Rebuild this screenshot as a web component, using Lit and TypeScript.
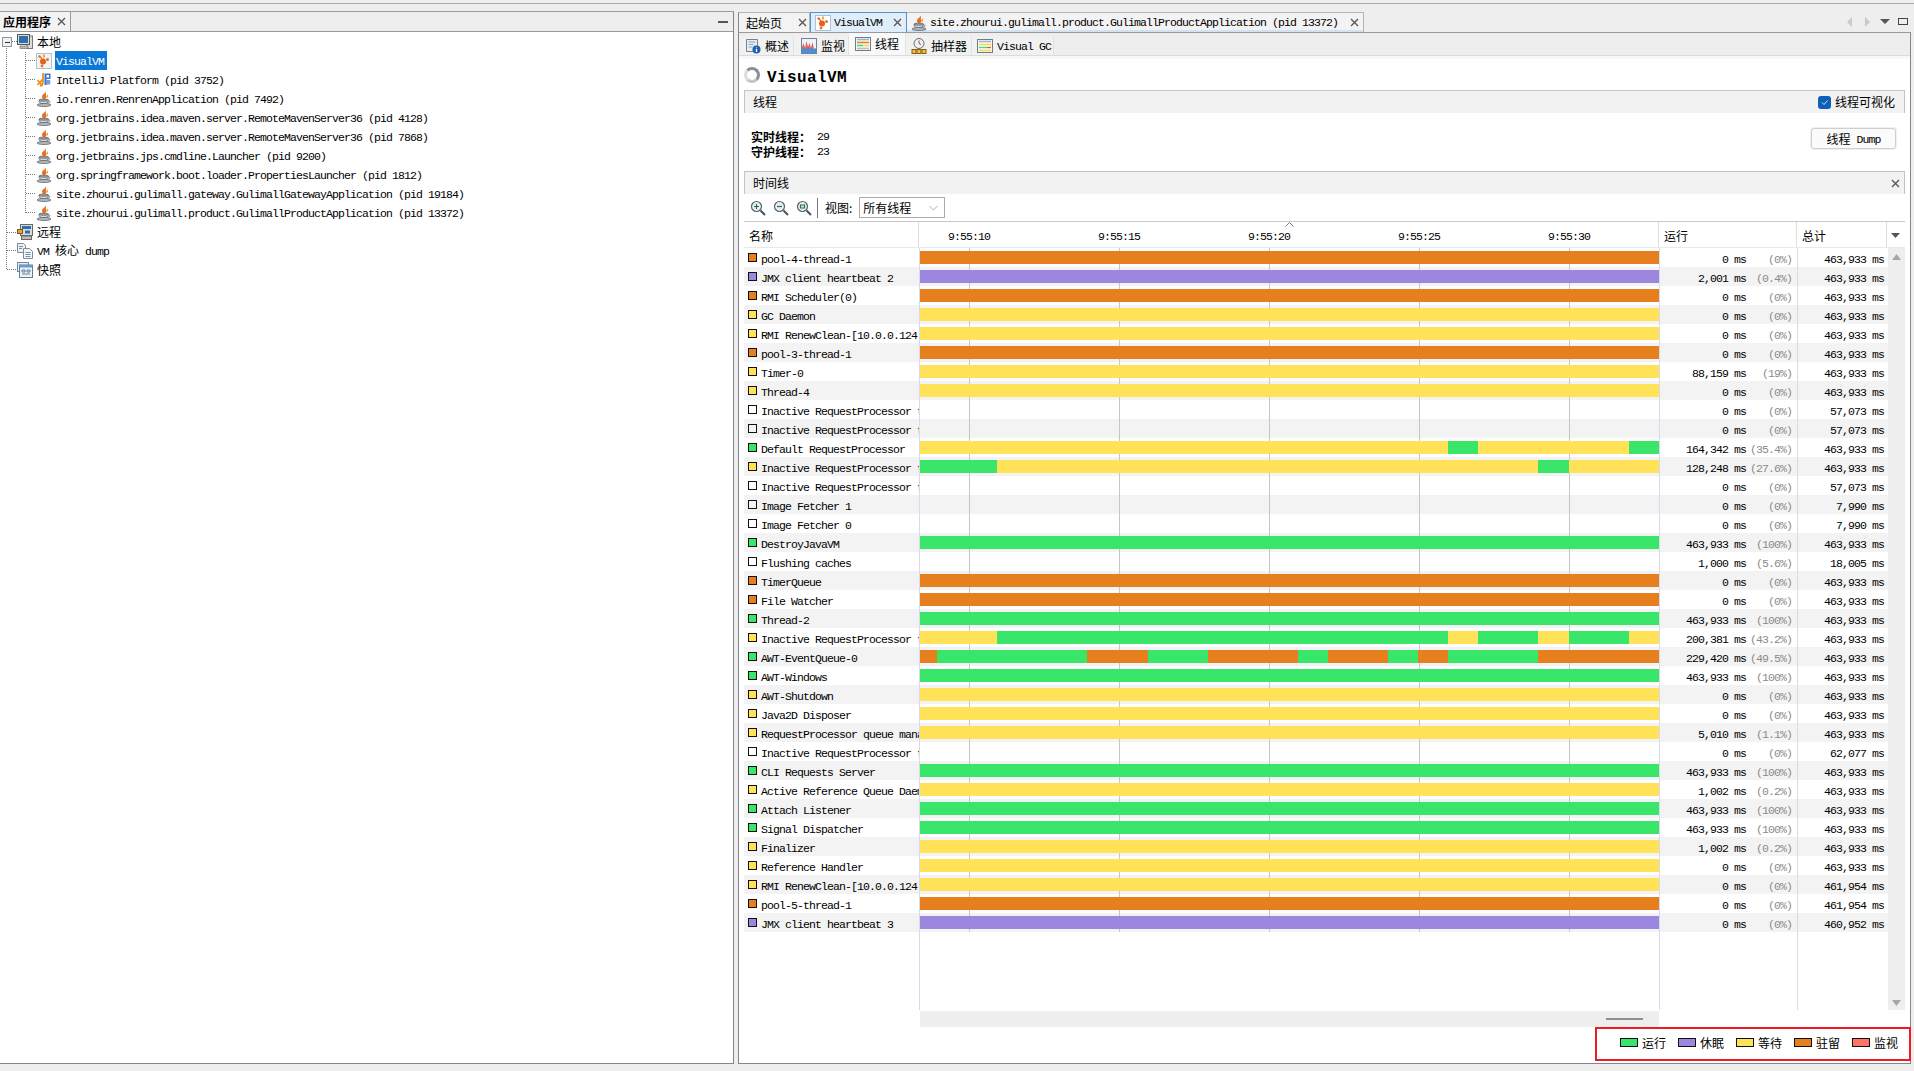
import { LitElement, html, css, svg } from "lit";
import { customElement } from "lit/decorators.js";

const C: Record<string, string> = { g: "#3ae66a", p: "#9b87dd", y: "#ffe257", o: "#e6801e", r: "#ff7369", n: "transparent" };
const INA = "Inactive RequestProcessor thread [Was:Default]";
const RMI = "RMI RenewClean-[10.0.0.124:52301]";
const T = "463,933";
type Seg = [string, number];
type Row = [string, string, string, string, string, Seg[]?];
const rows: Row[] = [
  ["pool-4-thread-1", "o", "0", "0%", T],
  ["JMX client heartbeat 2", "p", "2,001", "0.4%", T],
  ["RMI Scheduler(0)", "o", "0", "0%", T],
  ["GC Daemon", "y", "0", "0%", T],
  [RMI, "y", "0", "0%", T],
  ["pool-3-thread-1", "o", "0", "0%", T],
  ["Timer-0", "y", "88,159", "19%", T],
  ["Thread-4", "y", "0", "0%", T],
  [INA, "n", "0", "0%", "57,073"],
  [INA, "n", "0", "0%", "57,073"],
  ["Default RequestProcessor", "g", "164,342", "35.4%", T, [["y", 1448], ["g", 1478], ["y", 1629], ["g", 1659]]],
  [INA, "y", "128,248", "27.6%", T, [["g", 997], ["y", 1538], ["g", 1569], ["y", 1659]]],
  [INA, "n", "0", "0%", "57,073"],
  ["Image Fetcher 1", "n", "0", "0%", "7,990"],
  ["Image Fetcher 0", "n", "0", "0%", "7,990"],
  ["DestroyJavaVM", "g", T, "100%", T],
  ["Flushing caches", "n", "1,000", "5.6%", "18,005"],
  ["TimerQueue", "o", "0", "0%", T],
  ["File Watcher", "o", "0", "0%", T],
  ["Thread-2", "g", T, "100%", T],
  [INA, "y", "200,381", "43.2%", T, [["y", 997], ["g", 1448], ["y", 1478], ["g", 1538], ["y", 1569], ["g", 1629], ["y", 1659]]],
  ["AWT-EventQueue-0", "g", "229,420", "49.5%", T, [["o", 937], ["g", 1087], ["o", 1148], ["g", 1208], ["o", 1298], ["g", 1328], ["o", 1388], ["g", 1418], ["o", 1448], ["g", 1538], ["o", 1659]]],
  ["AWT-Windows", "g", T, "100%", T],
  ["AWT-Shutdown", "y", "0", "0%", T],
  ["Java2D Disposer", "y", "0", "0%", T],
  ["RequestProcessor queue manager", "y", "5,010", "1.1%", T],
  [INA, "n", "0", "0%", "62,077"],
  ["CLI Requests Server", "g", T, "100%", T],
  ["Active Reference Queue Daemon", "y", "1,002", "0.2%", T],
  ["Attach Listener", "g", T, "100%", T],
  ["Signal Dispatcher", "g", T, "100%", T],
  ["Finalizer", "y", "1,002", "0.2%", T],
  ["Reference Handler", "y", "0", "0%", T],
  [RMI, "y", "0", "0%", "461,954"],
  ["pool-5-thread-1", "o", "0", "0%", "461,954"],
  ["JMX client heartbeat 3", "p", "0", "0%", "460,952"],
];

const java = html`<svg class="ic" viewBox="0 0 16 16" width="16" height="16">
  <path d="M9.200 0c1.400 2.200-3.700 3.400-3.200 6 .2 1 .9 1.500 1 2.300h1.800c1.900-1.200 2.100-2.900 1.300-4.100C9.300 3.200 10.800 1.700 9.200 0z" fill="#e8701a"/>
  <path d="M11.400 3c.8 1.400-1.200 2.200-.6 4 1-.8 2.200-2.400.6-4z" fill="#ee8a30"/>
  <path d="M3 9.200h9.400c.1 2.600-1.700 3.700-4.700 3.700S2.900 11.800 3 9.200z" fill="#d6dadf" stroke="#5f656b" stroke-width=".8"/>
  <ellipse cx="7.700" cy="9.200" rx="4.700" ry="1.100" fill="#9aa0a6" stroke="#5e646a" stroke-width=".7"/>
  <path d="M12.300 9.800c2.200-.4 2.200 2.200-.6 2.400" stroke="#5f656b" stroke-width=".8" fill="none"/>
  <ellipse cx="8" cy="14" rx="7" ry="1.500" fill="#b4b9be" stroke="#5e646a" stroke-width=".8"/>
</svg>`;
const vvmInner = svg`<path d="M8 1.500v3M6 6l-2-2.500" stroke="#e8761a" stroke-width="1.300" fill="none"/>
  <circle cx="7" cy="8.500" r="3" fill="#e8601a"/><circle cx="11.500" cy="6.500" r="1.500" fill="#e8761a"/>
  <circle cx="3.500" cy="3.500" r="1.200" fill="#e8761a"/><circle cx="6" cy="13" r="1.400" fill="#e8761a"/>`;
const vvmIc = html`<svg class="ic" viewBox="0 0 16 16" width="16" height="16"><rect x=".5" y=".5" width="15" height="15" fill="#f4f4f4" stroke="#a9c4dc"/>${vvmInner}</svg>`;
const vvmIcWhite = html`<svg class="ic" viewBox="0 0 16 16" width="16" height="16"><rect x=".5" y=".5" width="15" height="15" fill="#fff" stroke="#a9c4dc"/>${vvmInner}</svg>`;
const ijIc = html`<svg class="ic" viewBox="0 0 16 16" width="16" height="16">
  <path d="M9 1.500h5.500v5.500H10.500v6H8.500V1.500z M10.500 3v2.500h2.500V3z" fill="#3b78c8" fill-rule="evenodd"/>
  <path d="M7 1v8.500c0 2.500-1 4-3 4.500M1.500 13l5.500-6M1.500 8l5 6" stroke="#f08a1a" stroke-width="1.700" fill="none"/>
  <path d="M10 8h3.500c1.200 0 1.200 4.500 0 4.500H10z" fill="#6d9fe0"/>
</svg>`;
const compIc = html`<svg class="ic" viewBox="0 0 16 16" width="16" height="16">
  <rect x="10" y="2" width="5.500" height="12.500" fill="#dcdcdc" stroke="#777"/>
  <rect x=".5" y=".5" width="12" height="10" fill="#d8dde2" stroke="#555"/>
  <rect x="2" y="2" width="9" height="7" fill="#2f6fa8"/>
  <path d="M3 12h8v2.500H3z" fill="#bbb" stroke="#666" stroke-width=".6"/>
</svg>`;
const remoteIc = html`<svg class="ic" viewBox="0 0 16 16" width="16" height="16">
  <rect x="3.500" y=".5" width="12" height="11" fill="#d8dde2" stroke="#666"/>
  <rect x="5" y="2" width="9" height="3" fill="#2f6fa8"/><rect x="8" y="6.500" width="5" height="3" fill="#2f6fa8"/>
  <rect x=".5" y="5.500" width="5" height="4" fill="#e8a13a" stroke="#7a5a20"/>
  <rect x="4.500" y="12" width="10" height="3.500" fill="#bbb" stroke="#666"/>
</svg>`;
const dumpIc = html`<svg class="ic" viewBox="0 0 16 16" width="16" height="16">
  <path d="M.5.500h6l2 2v7h-8z" fill="#eef1f4" stroke="#7f8a94"/>
  <path d="M6.500 5.500h6l3 3v7h-9z" fill="#f4f6f8" stroke="#7f8a94"/>
  <path d="M2 3.500h4M2 5.500h3M8.500 9.500h5M8.500 11.500h5M8.500 13.500h5" stroke="#6f93b5"/>
</svg>`;
const snapIc = html`<svg class="ic" viewBox="0 0 16 16" width="16" height="16">
  <rect x=".5" y=".5" width="11" height="9" fill="#e8edf2" stroke="#6d8aa5"/>
  <rect x="2.500" y="3" width="13" height="12.500" fill="#eef2f6" stroke="#5e7f9e"/>
  <rect x="2.500" y="3" width="13" height="2.500" fill="#6d9bc5"/>
  <path d="M5 8h3v2H5zM10 8h3v2h-3zM5 12h8" stroke="#5e7f9e" fill="none"/>
</svg>`;
const infoIc = html`<svg class="ic" viewBox="0 0 16 16" width="16" height="16">
  <path d="M1.500 1.500h11v12h-11z" fill="#e9edf1" stroke="#77838f"/>
  <path d="M3.500 4h7M3.500 6.500h5M3.500 9h4" stroke="#8ea3b6"/>
  <circle cx="11.500" cy="11.500" r="4" fill="#1f5fb0"/><path d="M11.500 9.500v.8M11.500 11v3" stroke="#fff" stroke-width="1.300"/>
</svg>`;
const monIc = html`<svg class="ic" viewBox="0 0 16 16" width="16" height="16">
  <rect x=".5" y=".5" width="15" height="15" fill="#eef3f8" stroke="#6f8296"/>
  <path d="M1 12V9l1.500-4 1.500 5 1.500-7 1.500 6 1.500-4 1.500 5 1.500-6 1.500 7 1.500 1v3z" fill="#e4605a"/>
  <path d="M1 15v-4l2-2 2 3 2-3 2 3 2-3 2 2 2-1v5z" fill="#4a8fd8"/>
</svg>`;
const bars = html`<svg class="ic" viewBox="0 0 16 16" width="16" height="16">
  <rect x=".5" y="1.500" width="15" height="13" fill="#f2f4f6" stroke="#6f7c88"/>
  <path d="M2 3.500h12" stroke="#9fb3c6" stroke-width="1.500"/>
  <path d="M2 6.500h12" stroke="#e6801e" stroke-width="1.500"/><path d="M2 9.500h6" stroke="#3ae66a" stroke-width="1.500"/><path d="M8 9.500h6" stroke="#ffd84a" stroke-width="1.500"/><path d="M2 12.500h12" stroke="#b9c0c7" stroke-width="1.500"/>
</svg>`;
const gcIc = html`<svg class="ic" viewBox="0 0 16 16" width="16" height="16">
  <rect x=".5" y="1.500" width="15" height="13" fill="#f6f7f8" stroke="#6f7c88"/>
  <path d="M2 3.500h12" stroke="#9fb3c6" stroke-width="1.500"/>
  <path d="M2 6.500h12M2 12.500h12" stroke="#ffd84a" stroke-width="1.300"/><path d="M2 9.500h8" stroke="#3ae66a" stroke-width="1.300"/><path d="M10 9.500h4" stroke="#e6601e" stroke-width="1.300"/>
</svg>`;
const samplerIc = html`<svg class="ic" viewBox="0 0 16 16" width="16" height="16">
  <circle cx="8" cy="5.500" r="5" fill="#eef1f4" stroke="#5f6b76"/>
  <path d="M8 2.500v3l2 1" stroke="#c0392b" fill="none"/>
  <rect x="1" y="11.500" width="4" height="4" fill="#f0c040" stroke="#8a5a10"/><rect x="6" y="11.500" width="4" height="4" fill="#f0c040" stroke="#8a5a10"/><rect x="11" y="11.500" width="4" height="4" fill="#f0c040" stroke="#8a5a10"/>
</svg>`;
const zoomIc = (d: string) => html`<svg class="ic" viewBox="0 0 16 16" width="16" height="16">
  <circle cx="6.500" cy="6.500" r="5" fill="#e6eff5" stroke="#55636e" stroke-width="1.200"/>
  <path d="M10.500 10.500l4.500 4.500" stroke="#47525b" stroke-width="2"/>
  <path d="${d}" stroke="#2c6b3c" stroke-width="1.200" fill="none"/>
</svg>`;
const X = html`<svg class="ic" viewBox="0 0 9 9" width="9" height="9"><path d="M1 1l7 7M8 1l-7 7" stroke="#555" stroke-width="1.300"/></svg>`;

@customElement("app-root")
export class AppRoot extends LitElement {
  static styles = css`
    :host { display: block; width: 1914px; height: 1071px; background: #eeeeee; overflow: hidden; color: #000;
      font: 11.5px/1 "Liberation Mono", "Noto Sans CJK SC", monospace; letter-spacing: -0.9px; }
    * { box-sizing: border-box; }
    .c { font: 12px/1 "Noto Sans CJK SC", sans-serif; letter-spacing: 0; }
    .cb { font: 700 12px/1 "Noto Sans CJK SC", sans-serif; letter-spacing: 0; }
    .ic { display: block; flex: none; }
    .topline { height: 11px; padding-top: 3px; }
    .topline div { height: 1px; background: #ababab; }
    .main { display: flex; height: 1053px; gap: 4px; padding-right: 3px; }
    .left { width: 734px; display: flex; flex-direction: column; background: #fff; border-top: 1px solid #9a9a9a; border-right: 1px solid #85858f; border-bottom: 1px solid #85858f; }
    .lhead { height: 20px; flex: none; display: flex; align-items: center; justify-content: space-between; background: #eeeeee; border-bottom: 1px solid #9a9a9a; padding-right: 5px; }
    .ltab { height: 19px; width: 71px; display: flex; align-items: center; padding-left: 3px; gap: 6px; background: #f3f3f3; border-right: 1px solid #9a9a9a; }
    .minus { width: 10px; height: 2px; background: #555; }
    .tree { position: relative; flex: 1; }
    .guides { position: absolute; left: 0; top: -32px; pointer-events: none; }
    .tr { height: 19px; display: flex; align-items: center; white-space: pre; }
    .tr.root { padding-left: 17px; gap: 4px; }
    .tr.kid { padding-left: 36px; gap: 4px; }
    .tr.kid .mono { padding-top: 3px; }
    .tr.root .mono { padding-top: 1px; }
    .sel { background: #0a78d7; color: #fff; height: 19px; width: 52px; display: flex; align-items: center; padding: 2px 0 0 1px; margin-left: -1px; }

    .right { flex: 1; display: flex; flex-direction: column; min-width: 0; }
    .tabs { height: 21px; flex: none; display: flex; align-items: stretch; padding-top: 1px; }
    .tab { display: flex; align-items: center; background: #f3f3f3; border: 1px solid #b5b5b5; border-width: 1px 1px 0 0; white-space: pre; flex: none; }
    .tab.first { border-left: 1px solid #85858f; }
    .tab.active { background: #dfeefa; border-color: #4f93cf; border-left: 1px solid #4f93cf; }
    .tab.t3 { box-shadow: inset 0 -2px 0 #cfe3f5; }
    .t1 { width: 72px; padding-left: 7px; gap: 16px; }
    .t2 { width: 97px; padding-left: 4px; }
    .t2 .lbl { margin-left: 3px; width: 59px; padding-top: 1px; }
    .t3 { width: 457px; padding-left: 4px; }
    .t3 .lbl { margin-left: 1px; width: 416px; padding-left: 2px; padding-top: 1px; margin-right: 6px; }
    .tnav { margin-left: auto; display: flex; align-items: center; height: 20px; }
    .body { flex: 1; display: flex; flex-direction: column; background: #fff; border: 1px solid #85858f; border-top-color: #9a9a9a; min-height: 0; }
    .subs { height: 23px; flex: none; background: #eeeeee; border-bottom: 1px solid #dcdcdc; display: flex; align-items: flex-end; padding-left: 1px; }
    .sub { height: 19px; display: flex; align-items: center; gap: 4px; padding-left: 5px; background: #f1f1f1; border-right: 1px solid #e2e2e2; white-space: pre; flex: none; }
    .sub.on { height: 22px; background: #f9f9f9; align-items: flex-start; padding-top: 3px; }
    .sub.on .c { margin-top: 2px; }
    .sub .mono { padding-top: 3px; }
    .w54 { width: 54px; } .w55 { width: 55px; padding-left: 7px; } .w57 { width: 57px; padding-left: 6px; } .w66 { width: 66px; } .w82 { width: 82px; }
    .strip { height: 3px; flex: none; background: #f8f8f8; }
    .content { flex: 1; display: flex; flex-direction: column; padding: 0 5px; min-height: 0; }
    .title { height: 20px; margin-top: 8px; flex: none; display: flex; align-items: center; gap: 7px; }
    .title b { font: 700 16px/1 "Liberation Mono", monospace; letter-spacing: 0.4px; margin-top: 2px; }
    .spin { width: 16px; height: 16px; border-radius: 50%; border: 3px solid #8a8f94; border-left-color: #ddd; border-bottom-color: #c3c6c9; margin-top: -4px; }
    .sec { height: 23px; margin-top: 3px; flex: none; display: flex; align-items: center; justify-content: space-between; background: #f2f2f2; border: 1px solid #c4c4c4; border-width: 1px 1px 0 1px; padding: 0 6px 0 8px; }
    .sec.tl { margin-top: 0; padding-right: 4px; }
    .chk { display: flex; align-items: center; gap: 4px; padding-right: 3px; }
    .box { width: 13px; height: 13px; border-radius: 3px; background: #0d5fb8; display: flex; align-items: center; justify-content: center; }
    .info { height: 58px; flex: none; display: flex; justify-content: space-between; padding: 16px 9px 0 7px; }
    .stat { height: 15px; display: flex; align-items: center; white-space: pre; }
    .stat .cb { width: 60px; }
    .stat .num { margin-left: 6px; padding-top: 1px; }
    .btn { width: 85px; height: 21px; margin-top: -1px; border: 1px solid #cfcfcf; border-radius: 3px; background: #fbfbfb; box-shadow: 0 0 0 1px #f0f0f0; display: flex; align-items: center; justify-content: center; gap: 6px; white-space: pre; }
    .btn .mono { padding-top: 2px; }
    .tools { height: 27px; flex: none; display: flex; align-items: center; padding: 0 0 0 6px; gap: 7px; }
    .sep { width: 1px; height: 20px; background: #777; margin-left: -2px; }
    .combo { width: 86px; height: 21px; border: 1px solid #ababab; display: flex; align-items: center; justify-content: space-between; padding: 0 6px 0 3px; }
    .thead { height: 27px; flex: none; display: flex; border-top: 1px solid #c8c8c8; border-bottom: 1px solid #e9e9e9; }
    .th { height: 25px; display: flex; align-items: center; flex: none; border-right: 1px solid #dedede; padding-top: 3px; }
    .th.n { width: 175px; padding-left: 5px; }
    .th.t { width: 740px; position: relative; padding-left: 29px; gap: 108px; }
    .tick { width: 42px; flex: none; padding-top: 1px; }
    .th.r { width: 138px; padding-left: 5px; }
    .th.s { width: 90px; padding-left: 5px; }
    .th.a { flex: 1; border: 0; justify-content: center; padding-right: 2px; padding-top: 2px; }
    .caret { position: absolute; left: 366px; top: 0; }
    .tbody { flex: 1; display: flex; min-height: 0; }
    .rows { width: 1144px; flex: none; display: flex; flex-direction: column; }
    .row { height: 19px; display: flex; flex: none; }
    .row.alt { background: #f3f3f3; }
    .row.fill { flex: 1; }
    .name { width: 176px; flex: none; border-right: 1px solid #d6dcf0; background: inherit; display: flex; align-items: flex-start; padding: 5px 0 0 4px; gap: 4px; white-space: pre; overflow: hidden; }
    .name span { margin-top: 1px; line-height: 11px; }
    .dot { width: 9px; height: 9px; flex: none; border: 1px solid #111; }
    .line { width: 739px; flex: none; padding-top: 3px; background-repeat: no-repeat;
      background-image: linear-gradient(#c6c6c6, #c6c6c6), linear-gradient(#c6c6c6, #c6c6c6), linear-gradient(#c6c6c6, #c6c6c6), linear-gradient(#c6c6c6, #c6c6c6), linear-gradient(#c6c6c6, #c6c6c6);
      background-size: 1px 100%; background-position: 49px 0, 199px 0, 349px 0, 499px 0, 649px 0; }
    .line.plain { background-image: none; }
    .barwrap { height: 13px; display: flex; }
    .run { width: 138px; flex: none; border-left: 1px solid #d6dcf0; display: flex; justify-content: flex-end; align-items: center; padding: 5px 5px 0 0; white-space: pre; }
    .pct { width: 46px; text-align: right; color: #8a8a8a; }
    .tot { width: 91px; flex: none; border-left: 1px solid #d6dcf0; display: flex; justify-content: flex-end; align-items: center; padding: 5px 4px 0 0; white-space: pre; }
    .vs { width: 17px; flex: none; background: #eeeeee; display: flex; flex-direction: column; justify-content: space-between; align-items: center; padding: 6px 0 4px; }
    .hs { height: 16px; flex: none; margin-left: 176px; width: 739px; background: #eeeeee; padding: 7px 0 0 686px; margin-top: 1px; }
    .hs div { width: 37px; height: 2px; background: #8f8f8f; }
    .legend { height: 34px; width: 316px; flex: none; align-self: flex-end; margin: 0 -6px 2px 0; border: 2px solid #ed1c24; display: flex; justify-content: flex-end; align-items: center; gap: 12px; padding: 0 11px 3px 0; }
    .li { display: flex; align-items: center; gap: 4px; }
    .sw { width: 18px; height: 9px; border: 1px solid #111; }
  `;

  private row(r: Row, i: number) {
    const [n, col, run, pct, tot, segs] = r;
    let prev = 920;
    const all: Seg[] = segs ?? (col === "n" ? [] : [[col, 1659]]);
    return html`<div class="row ${i % 2 ? "alt" : ""}">
      <div class="name"><i class="dot" style="background:${C[col]}"></i><span>${n}</span></div>
      <div class="line"><div class="barwrap">${all.map(([c, e]) => { const w = e - prev; prev = e; return html`<div style="background:${C[c]};width:${w}px"></div>`; })}</div></div>
      <div class="run"><span>${run} ms</span><span class="pct">(${pct})</span></div>
      <div class="tot">${tot} ms</div>
    </div>`;
  }

  render() {
    const kids: [unknown, string][] = [
      [ijIc, "IntelliJ Platform (pid 3752)"],
      [java, "io.renren.RenrenApplication (pid 7492)"],
      [java, "org.jetbrains.idea.maven.server.RemoteMavenServer36 (pid 4128)"],
      [java, "org.jetbrains.idea.maven.server.RemoteMavenServer36 (pid 7868)"],
      [java, "org.jetbrains.jps.cmdline.Launcher (pid 9200)"],
      [java, "org.springframework.boot.loader.PropertiesLauncher (pid 1812)"],
      [java, "site.zhourui.gulimall.gateway.GulimallGatewayApplication (pid 19184)"],
      [java, "site.zhourui.gulimall.product.GulimallProductApplication (pid 13372)"],
    ];
    const legend: [string, string][] = [["g", "运行"], ["p", "休眠"], ["y", "等待"], ["o", "驻留"], ["r", "监视"]];
    const dots = "#777";
    const hs = [60, 79, 98, 117, 136, 155, 174, 193, 212];
    return html`
      <div class="topline"><div></div></div>
      <div class="main">
        <section class="left">
          <div class="lhead"><div class="ltab"><span class="cb">应用程序</span>${X}</div><div class="minus"></div></div>
          <div class="tree">
            <svg class="guides" width="60" height="290" viewBox="0 0 60 290" shape-rendering="crispEdges">
              <path d="M6.500 46V270M25.500 52V213" stroke="${dots}" stroke-dasharray="1 1" fill="none"/>
              ${hs.map((y) => svg`<path d="M26 ${y}.5H35" stroke="${dots}" stroke-dasharray="1 1"/>`)}
              <path d="M12 41.500H17M7 232.500H17M7 250.500H17M7 269.500H17" stroke="${dots}" stroke-dasharray="1 1"/>
              <rect x="2.500" y="37.500" width="9" height="9" fill="#eef2f5" stroke="#8c97a0"/>
              <path d="M4.500 42H9.500" stroke="#333"/>
            </svg>
            <div class="tr root">${compIc}<span class="c">本地</span></div>
            <div class="tr kid">${vvmIc}<div class="sel">VisualVM</div></div>
            ${kids.map(([ic, t]) => html`<div class="tr kid">${ic}<span class="mono">${t}</span></div>`)}
            <div class="tr root">${remoteIc}<span class="c">远程</span></div>
            <div class="tr root">${dumpIc}<span class="mono">VM <span class="c">核心</span> dump</span></div>
            <div class="tr root">${snapIc}<span class="c">快照</span></div>
          </div>
        </section>
        <section class="right">
          <div class="tabs">
            <div class="tab first t1"><span class="c">起始页</span>${X}</div>
            <div class="tab active t2">${vvmIcWhite}<span class="lbl">VisualVM</span>${X}</div>
            <div class="tab t3">${java}<span class="lbl">site.zhourui.gulimall.product.GulimallProductApplication (pid 13372)</span>${X}</div>
            <div class="tnav">
              <svg width="71" height="12" viewBox="0 0 71 12">
                <path d="M12 1l-5 5 5 5z" fill="#c9c9c9"/><path d="M25 1l5 5-5 5z" fill="#c9c9c9"/>
                <path d="M40 3h10l-5 5z" fill="#555"/><rect x="58.500" y="2.500" width="9" height="6" fill="none" stroke="#444"/>
              </svg>
            </div>
          </div>
          <div class="body">
            <div class="subs">
              <div class="sub w54">${infoIc}<span class="c">概述</span></div>
              <div class="sub w55">${monIc}<span class="c">监视</span></div>
              <div class="sub on w57">${bars}<span class="c">线程</span></div>
              <div class="sub w66">${samplerIc}<span class="c">抽样器</span></div>
              <div class="sub w82">${gcIc}<span class="mono">Visual GC</span></div>
            </div>
            <div class="strip"></div>
            <div class="content">
              <div class="title"><div class="spin"></div><b>VisualVM</b></div>
              <div class="sec"><span class="c">线程</span>
                <div class="chk"><div class="box"><svg width="9" height="9" viewBox="0 0 9 9"><path d="M2 4.500l2 2 3.500-4" stroke="#cfe3f7" fill="none"/></svg></div><span class="c">线程可视化</span></div>
              </div>
              <div class="info">
                <div>
                  <div class="stat"><span class="cb">实时线程：</span><span class="num">29</span></div>
                  <div class="stat"><span class="cb">守护线程：</span><span class="num">23</span></div>
                </div>
                <div class="btn"><span class="c">线程</span><span class="mono">Dump</span></div>
              </div>
              <div class="sec tl"><span class="c">时间线</span>${X}</div>
              <div class="tools">
                ${zoomIc("M4 6.500h5M6.500 4v5")}${zoomIc("M4 6.500h5")}${zoomIc("M4.500 5h4v3h-4z")}
                <div class="sep"></div><span class="c">视图:</span>
                <div class="combo"><span class="c">所有线程</span><svg width="9" height="6" viewBox="0 0 9 6"><path d="M.5 1l4 4 4-4" stroke="#aaa" fill="none"/></svg></div>
              </div>
              <div class="thead">
                <div class="th n"><span class="c">名称</span></div>
                <div class="th t">
                  <svg class="caret" width="9" height="5" viewBox="0 0 9 5"><path d="M.5 4.500l4-4 4 4" stroke="#777" fill="none"/></svg>
                  ${["9:55:10", "9:55:15", "9:55:20", "9:55:25", "9:55:30"].map((t) => html`<span class="tick">${t}</span>`)}
                </div>
                <div class="th r"><span class="c">运行</span></div>
                <div class="th s"><span class="c">总计</span></div>
                <div class="th a"><svg width="9" height="5" viewBox="0 0 9 5"><path d="M0 0h9L4.500 5z" fill="#555"/></svg></div>
              </div>
              <div class="tbody">
                <div class="rows">
                  ${rows.map((r, i) => this.row(r, i))}
                  <div class="row fill">
                    <div class="name"></div><div class="line plain"></div><div class="run"></div><div class="tot"></div>
                  </div>
                </div>
                <div class="vs">
                  <svg width="9" height="6" viewBox="0 0 9 6"><path d="M0 6L4.500 0 9 6z" fill="#a6a6a6"/></svg>
                  <svg width="9" height="6" viewBox="0 0 9 6"><path d="M0 0h9L4.500 6z" fill="#a6a6a6"/></svg>
                </div>
              </div>
              <div class="hs"><div></div></div>
              <div class="legend">
                ${legend.map(([c, t]) => html`<div class="li"><i class="sw" style="background:${C[c]}"></i><span class="c">${t}</span></div>`)}
              </div>
            </div>
          </div>
        </section>
      </div>
    `;
  }
}
